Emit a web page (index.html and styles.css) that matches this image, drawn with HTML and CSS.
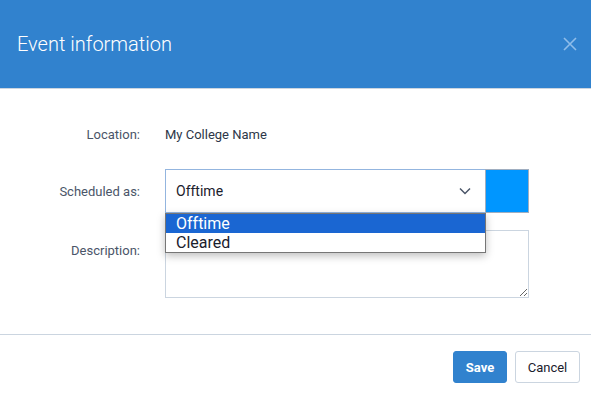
FILE: index.html
```html
<!DOCTYPE html>
<html>
<head>
<meta charset="utf-8">
<link rel="stylesheet" href="styles.css">
</head>
<body>
<div class="modal">
  <header class="modal-header">
    <h1 class="modal-title">Event information</h1>
    <button class="close-btn" aria-label="Close">
      <svg width="14" height="14" viewBox="0 0 14 14"><path d="M1 1L13 13M13 1L1 13" stroke="#8fbdea" stroke-width="1.6" fill="none"/></svg>
    </button>
  </header>
  <main class="modal-body">
    <div class="form-grid">
      <div class="label">Location:</div>
      <div class="value">My College Name</div>

      <div class="label row-2">Scheduled as:</div>
      <div class="select-row row-2">
        <div class="select">
          <span class="select-text">Offtime</span>
          <svg class="chevron" width="12" height="8" viewBox="0 0 12 8"><path d="M1 1.5L6 6.5L11 1.5" stroke="#4a5568" stroke-width="1.5" fill="none"/></svg>
          <ul class="dropdown">
            <li class="option selected">Offtime</li>
            <li class="option">Cleared</li>
          </ul>
        </div>
        <div class="swatch"></div>
      </div>

      <div class="label label-desc row-3">Description:</div>
      <textarea class="textarea row-3"></textarea>
    </div>
  </main>
  <footer class="modal-footer">
    <button class="btn btn-primary">Save</button>
    <button class="btn btn-default">Cancel</button>
  </footer>
</div>
</body>
</html>
```

FILE: styles.css
```css
* { box-sizing: border-box; }
html, body { margin: 0; padding: 0; background: #fff; }
body { font-family: Roboto, "Liberation Sans", sans-serif; width: 591px; height: 397px; overflow: hidden; }

.modal-header {
  height: 89px;
  background: #3182ce;
  border-bottom: 1px solid #cbd5e0;
  display: flex;
  align-items: center;
  justify-content: space-between;
  padding: 0 14px 0 17px;
}
.modal-title {
  margin: 0;
  font-size: 20px;
  font-weight: 300;
  color: #fff;
  padding-bottom: 1px;
}
.close-btn {
  background: none;
  border: 0;
  padding: 0;
  width: 14px;
  height: 14px;
  display: flex;
}

.modal-body {
  padding: 23px 0 0 0;
  height: 246px;
  border-bottom: 1px solid #cbd5e0;
}
.form-grid {
  display: grid;
  grid-template-columns: 140px 364px;
  grid-template-rows: 44px 57px 85px;
  column-gap: 25px;
}
.row-2 { margin-top: 13px; }
.row-3 { margin-top: 17px; }

.label {
  font-size: 13px;
  color: #4a5568;
  display: flex;
  align-items: center;
  justify-content: flex-end;
  height: 44px;
}
.label-desc { height: 40px; }
.value {
  font-size: 13px;
  color: #2d3748;
  display: flex;
  align-items: center;
  height: 44px;
}

.select-row { display: flex; height: 44px; }
.select {
  position: relative;
  width: 320px;
  height: 44px;
  border: 1px solid #93b5df;
  border-right: 0;
  display: flex;
  align-items: center;
  justify-content: space-between;
  padding: 0 14px 0 10px;
}
.select-text { font-size: 14px; color: #1a202c; }
.chevron { display: block; }
.swatch {
  width: 44px;
  height: 44px;
  background: #0096ff;
  border: 1px solid #a0aec0;
}
.dropdown {
  position: absolute;
  left: -1px;
  top: 43px;
  width: 321px;
  margin: 0;
  padding: 0;
  list-style: none;
  background: #fff;
  border: 1px solid #767676;
  box-shadow: 0 3px 8px rgba(0,0,0,0.25);
  z-index: 5;
}
.option {
  height: 19px;
  line-height: 19px;
  font-size: 16px;
  color: #1a202c;
  padding-left: 10px;
}
.option.selected { background: #1a66d2; color: #fff; }

.textarea {
  width: 364px;
  height: 68px;
  border: 1px solid #cbd5e0;
  margin-bottom: 0;
  padding: 6px;
  resize: both;
  font-family: inherit;
  display: block;
}

.modal-footer {
  display: flex;
  justify-content: flex-end;
  gap: 8px;
  padding: 16px 11px 0 0;
}
.btn {
  height: 32px;
  border-radius: 3px;
  font-family: inherit;
  font-size: 13px;
  cursor: pointer;
}
.btn-primary {
  width: 54px;
  background: #3182ce;
  border: 1px solid #3182ce;
  color: #fff;
  font-weight: 700;
}
.btn-default {
  width: 65px;
  background: #fff;
  border: 1px solid #cbd5e0;
  color: #1a202c;
}
```
